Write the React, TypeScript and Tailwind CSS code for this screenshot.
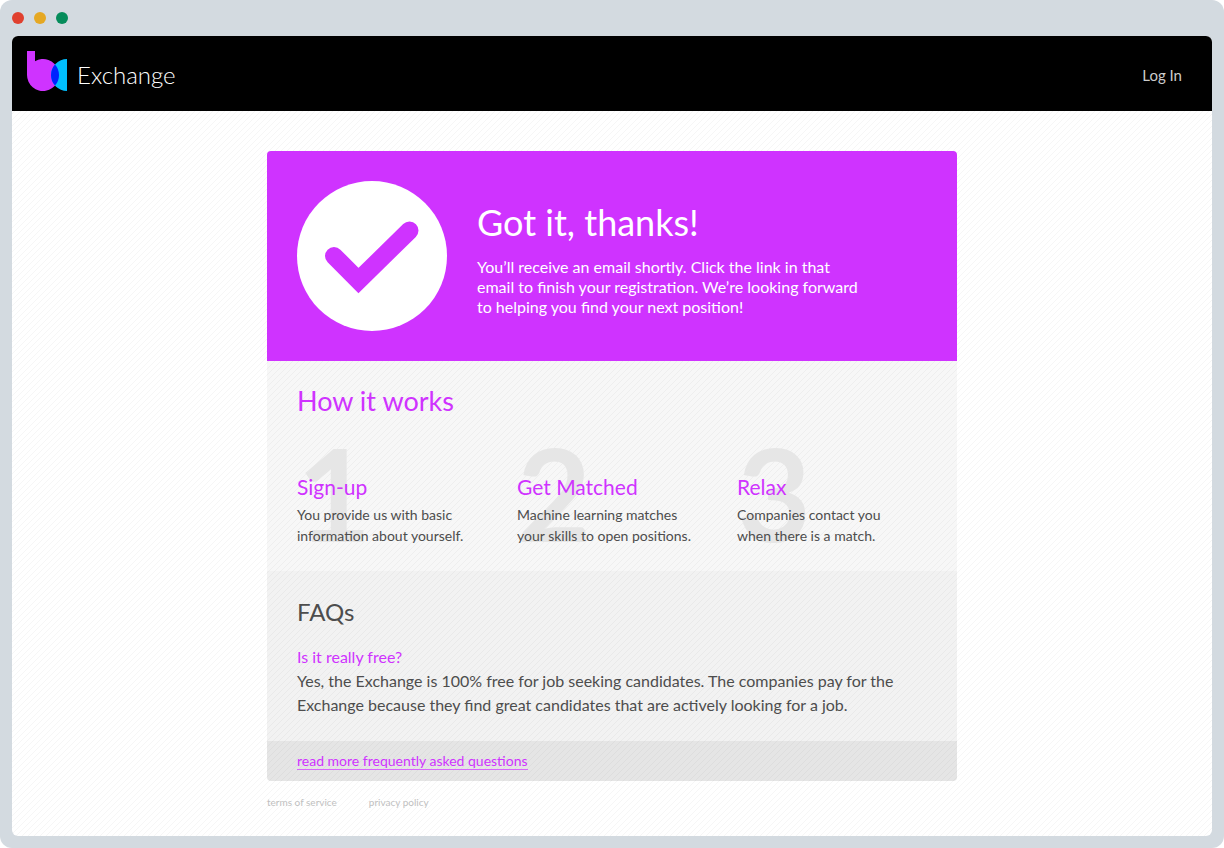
import React from 'react'

interface StepProps {
  number: string,
  title: string,
  lines: string[]
}

const steps: StepProps[] = [
  { number: '1', title: 'Sign-up', lines: ['You provide us with basic', 'information about yourself.'] },
  { number: '2', title: 'Get Matched', lines: ['Machine learning matches', 'your skills to open positions.'] },
  { number: '3', title: 'Relax', lines: ['Companies contact you', 'when there is a match.'] },
]

const stripes =
  'bg-[linear-gradient(135deg,transparent_42%,rgba(0,0,0,0.035)_42%,rgba(0,0,0,0.035)_58%,transparent_58%)] bg-[length:6px_6px]'

function Logo() {
  return (
    <svg width="40" height="40" viewBox="0 0 40 40" aria-hidden="true">
      <path d="M0 0H8V10.14A16 16 0 1 1 0 24Z" fill="#cf33ff" />
      <path d="M40 8A16 16 0 0 0 40 40Z" fill="#00bfff" />
      <path d="M28 13.42A16 16 0 0 1 28 34.58A16 16 0 0 1 28 13.42Z" fill="#0022ff" />
    </svg>
  )
}

function CheckMark() {
  return (
    <svg className="shrink-0" width="150" height="150" viewBox="0 0 150 150" aria-hidden="true">
      <circle cx="75" cy="75" r="75" fill="#fff" />
      <path d="M37 75L61.5 99.5L112.5 49.5" fill="none" stroke="#cf33ff" strokeWidth="18" strokeLinecap="round" />
    </svg>
  )
}

function Step({ number, title, lines }: StepProps) {
  return (
    <li className="relative pt-[42px]">
      <span className="absolute top-0 left-0 text-[128px] leading-[124px] font-bold text-[#e6e6e6]">{number}</span>
      <h3 className="relative text-[21px] leading-7 text-[#cf33ff]">{title}</h3>
      <p className="relative mt-[3px] text-sm leading-[21px]">
        {lines[0]}<br />{lines[1]}
      </p>
    </li>
  )
}

export default function App() {
  return (
    <div className="min-h-screen flex flex-col rounded-xl bg-[#d3dae0] px-3 pb-3 font-['Lato','Carlito',sans-serif] text-[#4d4d4d]">
      <div className="flex h-9 items-center gap-[10px]">
        <span className="size-3 rounded-full bg-[#e0402f]" />
        <span className="size-3 rounded-full bg-[#e5a823]" />
        <span className="size-3 rounded-full bg-[#058c5b]" />
      </div>

      <div className={`flex-1 rounded-md overflow-hidden bg-white ${stripes}`}>
        <header className="flex h-[75px] items-center justify-between bg-black pl-[15px] pr-[30px]">
          <a href="#" className="flex items-center gap-[10px] pb-[6px]">
            <Logo />
            <span className="pt-2 text-2xl font-light text-white">Exchange</span>
          </a>
          <a href="#" className="pt-1 text-[15px] text-[#cccccc]">Log In</a>
        </header>

        <main className="mx-auto mt-10 max-w-[690px]">
          <div className="overflow-hidden rounded">
            <section className="flex min-h-[210px] items-center gap-[30px] bg-[#cf33ff] px-[30px] text-white">
              <CheckMark />
              <div className="pt-[6px]">
                <h1 className="text-4xl leading-[42px]">Got it, thanks!</h1>
                <p className="mt-[14px] max-w-[390px] text-base leading-5">
                  You’ll receive an email shortly. Click the link in that email to finish your registration. We’re looking forward to helping you find your next position!
                </p>
              </div>
            </section>

            <section className="min-h-[210px] bg-black/[0.03] px-[30px] pt-6">
              <h2 className="text-[27px] leading-8 text-[#cf33ff]">How it works</h2>
              <ol className="mt-[14px] grid grid-cols-[220px_220px_1fr]">
                {steps.map((step) => (
                  <Step key={step.number} {...step} />
                ))}
              </ol>
            </section>

            <section className="min-h-[170px] bg-black/[0.05] px-[30px] pt-6">
              <h2 className="text-2xl leading-[34px]">FAQs</h2>
              <h3 className="mt-4 text-base leading-6 text-[#cf33ff]">Is it really free?</h3>
              <p className="text-base leading-6">
                Yes, the Exchange is 100% free for job seeking candidates. The companies pay for the Exchange because they find great candidates that are actively looking for a job.
              </p>
            </section>

            <div className="flex h-10 items-center bg-black/10 px-[30px]">
              <a href="#" className="border-b border-[#d866fb] text-sm leading-4 text-[#cf33ff]">read more frequently asked questions</a>
            </div>
          </div>

          <footer className="flex gap-8 py-[13px] text-[10px] leading-4 text-[#bfbfbf]">
            <a href="#">terms of service</a>
            <a href="#">privacy policy</a>
          </footer>
        </main>
      </div>
    </div>
  )
}
